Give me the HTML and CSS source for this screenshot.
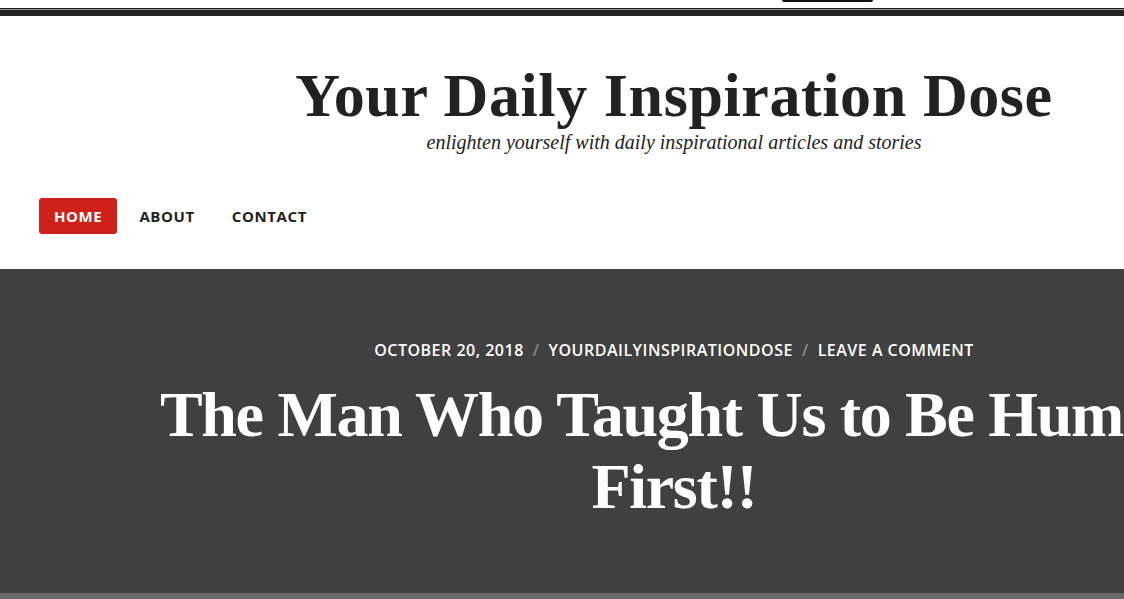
FILE: index.html
```html
<!DOCTYPE html>
<html lang="en">
<head>
<meta charset="utf-8">
<title>Your Daily Inspiration Dose</title>
<link rel="stylesheet" href="styles.css">
</head>
<body>
<div class="page">
  <div class="topstrip">
    <div class="tab"></div>
  </div>
  <div class="topbar"></div>
  <header class="site-header">
    <div class="branding">
      <h1 class="site-title">Your Daily Inspiration Dose</h1>
      <p class="site-desc">enlighten yourself with daily inspirational articles and stories</p>
    </div>
    <nav class="main-nav">
      <a class="nav-item active" href="#">Home</a>
      <a class="nav-item" href="#">About</a>
      <a class="nav-item" href="#">Contact</a>
    </nav>
  </header>
  <section class="hero">
    <div class="meta">
      <span>October 20, 2018</span><span class="sep">/</span><span>yourdailyinspirationdose</span><span class="sep">/</span><span>Leave a Comment</span>
    </div>
    <h2 class="post-title">The Man Who Taught Us to Be Human First!!</h2>
  </section>
  <div class="bottom"></div>
</div>
</body>
</html>
```

FILE: styles.css
```css
html, body {
  margin: 0;
  padding: 0;
  overflow: hidden;
  background: #fff;
}
.page {
  width: 1348px;
}
.topstrip {
  height: 8px;
  display: flex;
}
.tab {
  margin-left: 782px;
  width: 91px;
  height: 2px;
  background: #111;
  border-radius: 0 0 3px 3px;
}
.topbar {
  height: 7px;
  border-top: 1px solid #1a1a1a;
  box-shadow: inset 0 1px 0 #9a9a9a;
  background: #222;
}
.site-header {
  background: #fff;
}
.branding {
  padding: 47px 0 0 0;
  text-align: center;
  height: 137px;
  box-sizing: border-box;
}
.site-title {
  margin: 0;
  font-family: "Liberation Serif", serif;
  font-weight: 700;
  font-size: 62px;
  line-height: 64px;
  color: #222;
  letter-spacing: 0.6px;
}
.site-desc {
  margin: 4px 0 0 0;
  font-family: "Liberation Serif", serif;
  font-style: italic;
  font-size: 20px;
  line-height: 22px;
  color: #222;
}
.main-nav {
  display: flex;
  align-items: center;
  padding: 45px 0 35px 39px;
  gap: 7px;
}
.nav-item {
  display: block;
  padding: 0 15px;
  height: 36px;
  line-height: 36px;
  font-family: "Open Sans", sans-serif;
  font-weight: 700;
  font-size: 15px;
  letter-spacing: 0.6px;
  text-transform: uppercase;
  color: #222;
  text-decoration: none;
  border-radius: 3px;
}
.nav-item.active {
  background: #cd2119;
  color: #fff;
}
.hero {
  background: #404040;
  height: 324px;
  box-sizing: border-box;
  padding-top: 70px;
  text-align: center;
  color: #fff;
}
.meta {
  font-family: "Open Sans", sans-serif;
  font-weight: 600;
  font-size: 16px;
  line-height: 22px;
  text-transform: uppercase;
  letter-spacing: 0.5px;
}
.sep {
  color: #8a8a8a;
  margin: 0 9px;
}
.post-title {
  width: 1060px;
  margin: 18px auto 0 auto;
  font-family: "Liberation Serif", serif;
  font-weight: 700;
  font-size: 64px;
  line-height: 72px;
  letter-spacing: -1.3px;
  color: #fff;
}
.bottom {
  height: 6px;
  background: #666;
}
```
